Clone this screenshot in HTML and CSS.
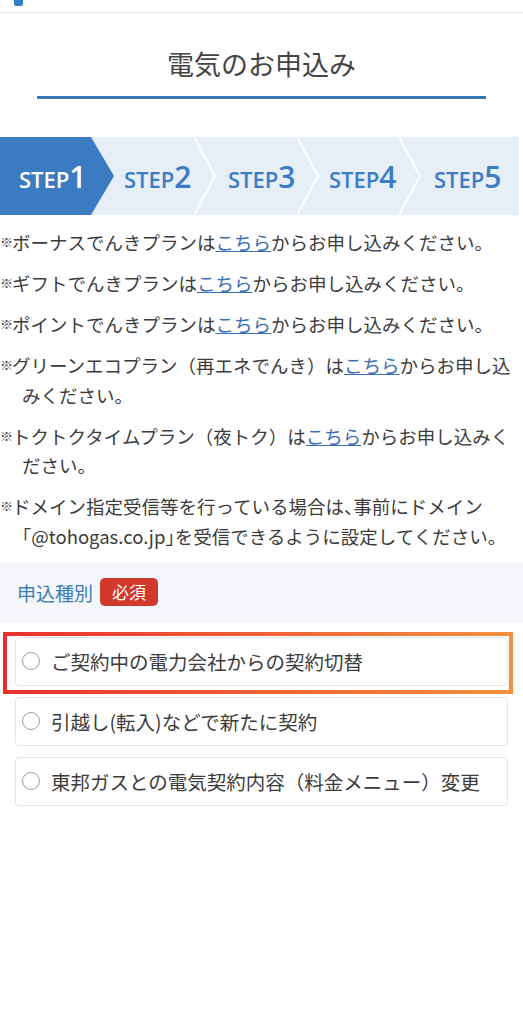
FILE: index.html
```html
<!DOCTYPE html>
<html lang="ja">
<head>
  <meta charset="UTF-8">
  <meta name="viewport" content="width=device-width, initial-scale=1.0">
  <title>電気のお申込み</title>
  <link rel="stylesheet" href="styles.css">
</head>
<body>
  <header class="site-header">
    <div class="logo">
      <span class="logo-mark"></span>
      <span class="logo-text">東邦ガス</span>
    </div>
  </header>

  <h1 class="page-title">電気のお申込み</h1>

  <!-- ステップ表示 -->
  <svg class="steps" width="519" height="78" viewBox="0 0 519 78">
    <rect class="step-bg" x="0" y="0" width="519" height="78"></rect>
    <polyline class="step-sep" points="193,-2 215,39 193,80"></polyline>
    <polyline class="step-sep" points="296,-2 318,39 296,80"></polyline>
    <polyline class="step-sep" points="398,-2 420,39 398,80"></polyline>
    <polygon class="step-current" points="0,0 91,0 114,39 91,78 0,78"></polygon>
    <text class="step-label is-current" x="19" y="51">STEP<tspan class="step-num">1</tspan></text>
    <text class="step-label" x="124" y="51">STEP<tspan class="step-num">2</tspan></text>
    <text class="step-label" x="228" y="51">STEP<tspan class="step-num">3</tspan></text>
    <text class="step-label" x="329" y="51">STEP<tspan class="step-num">4</tspan></text>
    <text class="step-label" x="434" y="51">STEP<tspan class="step-num">5</tspan></text>
  </svg>

  <ul class="notes">
    <li><span class="kome">※</span>ボーナスでんきプランは<a href="#">こちら</a>からお申し込みください。</li>
    <li><span class="kome">※</span>ギフトでんきプランは<a href="#">こちら</a>からお申し込みください。</li>
    <li><span class="kome">※</span>ポイントでんきプランは<a href="#">こちら</a>からお申し込みください。</li>
    <li><span class="kome">※</span>グリーンエコプラン（再エネでんき）は<a href="#">こちら</a>からお申し込みください。</li>
    <li><span class="kome">※</span>トクトクタイムプラン（夜トク）は<a href="#">こちら</a>からお申し込みください。</li>
    <li class="tight"><span class="kome">※</span>ドメイン指定受信等を行っている場合は、事前にドメイン「@tohogas.co.jp」を受信できるように設定してください。</li>
  </ul>

  <div class="field-head">
    <span class="field-label">申込種別</span>
    <span class="badge-required">必須</span>
  </div>

  <div class="options">
    <label class="option is-marked">
      <span class="radio"></span>
      <span class="option-text">ご契約中の電力会社からの契約切替</span>
    </label>
    <label class="option">
      <span class="radio"></span>
      <span class="option-text">引越し(転入)などで新たに契約</span>
    </label>
    <label class="option">
      <span class="radio"></span>
      <span class="option-text">東邦ガスとの電気契約内容（料金メニュー）変更</span>
    </label>
  </div>
</body>
</html>
```

FILE: styles.css
```css
body {
  margin: 0;
  font-family: "Noto Sans CJK JP", "Noto Sans", sans-serif;
  color: #3c3c3c;
  background-color: #fff;
}

.site-header {
  height: 12px;
  overflow: hidden;
  border-bottom: 1px solid #e6e8eb;
}

.logo {
  display: flex;
  align-items: flex-end;
  gap: 17px;
  padding-left: 14px;
  margin-top: -22px;
}

.logo-mark {
  width: 9px;
  height: 20px;
  margin-bottom: -3px;
  background-color: #2f7fc6;
  border-radius: 2px;
}

.logo-text {
  font-size: 18px;
  font-weight: bold;
  line-height: 25px;
  color: #222;
}

.page-title {
  margin: 32px 37px 0;
  padding-bottom: 13px;
  border-bottom: 3px solid #3b77b6;
  font-size: 27px;
  font-weight: normal;
  line-height: 38px;
  text-align: center;
  color: #444;
}

/* ステップ */
.steps {
  display: block;
  margin-top: 38px;
}

.step-bg {
  fill: #e6eff8;
}

.step-sep {
  fill: none;
  stroke: #fff;
  stroke-width: 2;
}

.step-current {
  fill: #3a7bc2;
}

.step-label {
  font-family: "Open Sans", sans-serif;
  font-size: 22px;
  font-weight: 600;
  fill: #3b7cc4;
}

.step-label.is-current {
  fill: #fff;
}

.step-num {
  font-size: 30px;
}

/* 注意書き */
.notes {
  list-style: none;
  margin: 13px 3px 0 0;
  padding: 0;
  font-size: 18.5px;
  line-height: 29.5px;
}

.notes li {
  padding-left: 22px;
  text-indent: -22px;
  margin-bottom: 11.5px;
}

.notes li.tight {
  font-feature-settings: "halt";
}

.kome {
  display: inline-block;
  width: 12px;
  text-indent: 0;
  font-size: 13px;
  font-weight: bold;
  vertical-align: 0.2em;
  line-height: 1;
}

.notes a {
  color: #3a6db5;
  text-decoration: underline;
}

/* 申込種別 */
.field-head {
  display: flex;
  align-items: center;
  gap: 7px;
  height: 61px;
  margin-top: -1px;
  padding-left: 17px;
  background-color: #f4f6f9;
}

.field-label {
  font-size: 19px;
  color: #3d7ab8;
}

.badge-required {
  padding: 0 12px;
  height: 28px;
  line-height: 28px;
  font-size: 17px;
  color: #fff;
  background-color: #d0392b;
  border-radius: 5px;
}

.options {
  display: flex;
  flex-direction: column;
  gap: 11px;
  margin: 14px 15px 0;
}

.option {
  display: flex;
  align-items: center;
  gap: 11px;
  height: 49px;
  box-sizing: border-box;
  padding-left: 6px;
  border: 1px solid #e2e5e9;
  border-radius: 4px;
  background-color: #fff;
}

.radio {
  width: 16px;
  height: 16px;
  border: 1px solid #9b9b9b;
  border-radius: 50%;
}

.option-text {
  font-size: 19.5px;
  color: #3c3c3c;
}

/* 注目枠 */
.option.is-marked {
  position: relative;
}

.option.is-marked::after {
  content: "";
  position: absolute;
  left: -13px;
  right: -6px;
  top: -6px;
  bottom: -9px;
  border: 4px solid #e9302d;
  border-image: linear-gradient(90deg, #e9302d, #f3903f) 1;
}
```
